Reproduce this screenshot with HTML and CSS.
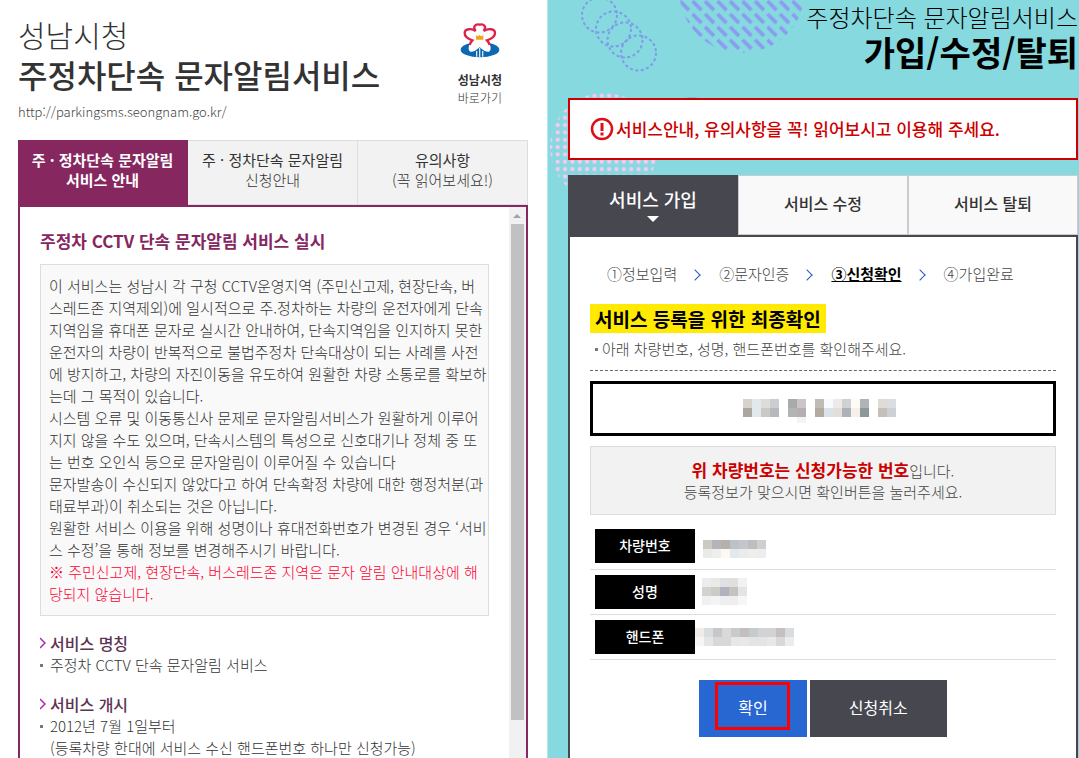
FILE: index.html
```html
<!DOCTYPE html>
<html lang="ko">
<head>
    <meta charset="UTF-8">
    <meta name="viewport" content="width=device-width, initial-scale=1.0">
    <title>주정차단속 문자알림서비스</title>
    <link rel="stylesheet" href="styles.css">
</head>
<body>
    <div class="page">
        <section class="guide">
            <header class="guide-header">
                <div>
                    <h1><span class="city">성남시청</span>주정차단속 문자알림서비스</h1>
                    <a class="site-url" href="#">http://parkingsms.seongnam.go.kr/</a>
                </div>
                <a class="city-link" href="#">
                    <svg width="40" height="35" viewBox="13 18 120 105" aria-hidden="true">
                        <ellipse cx="73" cy="98" rx="58" ry="23" fill="#0c68b3"/>
                        <path d="M60 42C50 28 60 20 72 23C84 20 94 28 84 42C96 34 118 34 118 48C118 60 106 66 94 70C104 82 110 98 100 104C88 106 78 96 72 90C66 96 56 106 44 104C34 98 40 82 50 70C38 66 27 60 27 48C27 34 50 34 60 42z" fill="#fff"/>
                        <path d="M42 84Q44 76 50 70C38 66 27 60 27 48C27 34 50 34 60 42C50 28 60 20 72 23C84 20 94 28 84 42C96 34 118 34 118 48C118 60 106 66 94 70Q100 76 102 84" fill="none" stroke="#e0204a" stroke-width="7"/>
                        <path d="M61 55l6 3 5-4 5 4 6-3v13H61z" fill="#f5a21b"/>
                        <path d="M63 102v17M72 92v28M81 102v17" stroke="#d5e6f4" stroke-width="4"/>
                    </svg>
                    <strong>성남시청</strong>
                    <span>바로가기</span>
                </a>
            </header>

            <nav class="guide-tabs">
                <a class="active" href="#">주 · 정차단속 문자알림<br>서비스 안내</a>
                <a href="#">주 · 정차단속 문자알림<br><span>신청안내</span></a>
                <a href="#">유의사항<br><span>(꼭 읽어보세요!)</span></a>
            </nav>

            <div class="guide-panel">
                <div class="guide-content">
                    <h2>주정차 CCTV 단속 문자알림 서비스 실시</h2>
                    <div class="guide-box">
                        <p>이 서비스는 성남시 각 구청 CCTV운영지역 (주민신고제, 현장단속, 버<br>스레드존 지역제외)에 일시적으로 주.정차하는 차량의 운전자에게 단속<br>지역임을 휴대폰 문자로 실시간 안내하여, 단속지역임을 인지하지 못한<br>운전자의 차량이 반복적으로 불법주정차 단속대상이 되는 사례를 사전<br>에 방지하고, 차량의 자진이동을 유도하여 원활한 차량 소통로를 확보하<br>는데 그 목적이 있습니다.</p>
                        <p>시스템 오류 및 이동통신사 문제로 문자알림서비스가 원활하게 이루어<br>지지 않을 수도 있으며, 단속시스템의 특성으로 신호대기나 정체 중 또<br>는 번호 오인식 등으로 문자알림이 이루어질 수 있습니다</p>
                        <p>문자발송이 수신되지 않았다고 하여 단속확정 차량에 대한 행정처분(과<br>태료부과)이 취소되는 것은 아닙니다.</p>
                        <p>원활한 서비스 이용을 위해 성명이나 휴대전화번호가 변경된 경우 ‘서비<br>스 수정’을 통해 정보를 변경해주시기 바랍니다.</p>
                        <p class="warning">※ 주민신고제, 현장단속, 버스레드존 지역은 문자 알림 안내대상에 해<br>당되지 않습니다.</p>
                    </div>
                    <h3><svg width="6" height="12" viewBox="0 0 6 12" aria-hidden="true"><path d="M0 1l5 5-5 5" fill="none" stroke="#b01fa8" stroke-width="1.4"/></svg>서비스 명칭</h3>
                    <ul>
                        <li>주정차 CCTV 단속 문자알림 서비스</li>
                    </ul>
                    <h3><svg width="6" height="12" viewBox="0 0 6 12" aria-hidden="true"><path d="M0 1l5 5-5 5" fill="none" stroke="#b01fa8" stroke-width="1.4"/></svg>서비스 개시</h3>
                    <ul>
                        <li>2012년 7월 1일부터<br>(등록차량 한대에 서비스 수신 핸드폰번호 하나만 신청가능)</li>
                    </ul>
                </div>
                <div class="scrollbar">
                    <svg width="17" height="17" viewBox="0 0 17 17" aria-hidden="true"><path d="M4 11l4-4 4 4z" fill="#a3a3a3"/></svg>
                    <div class="scroll-thumb"></div>
                </div>
            </div>
        </section>

        <section class="service">
            <svg class="pattern" width="270" height="210" viewBox="0 0 270 210" aria-hidden="true">
                <defs>
                    <pattern id="dots" width="7.35" height="7.35" patternUnits="userSpaceOnUse" patternTransform="translate(6 121.3)"><circle cx="3.7" cy="3.7" r="2.2" fill="#f6c8f2"/></pattern>
                    <pattern id="stripes" width="12.5" height="12.9" patternUnits="userSpaceOnUse" patternTransform="translate(143 12.5)"><path d="M1.5 1.5l9 9" stroke="#8b9cf0" stroke-width="3.8"/></pattern>
                </defs>
                <circle cx="194" cy="-10" r="63" fill="url(#stripes)"/>
                <circle cx="144" cy="115" r="18" fill="#7fb5e0"/>
                <circle cx="56" cy="147" r="54" fill="url(#dots)"/>
                <g fill="none" stroke="#7f9bea" stroke-width="2" stroke-dasharray="3 2.5">
                    <circle cx="51.5" cy="15" r="17.5"/>
                    <circle cx="65.5" cy="29" r="17.5"/>
                    <circle cx="77" cy="40" r="17.5"/>
                    <circle cx="90.5" cy="53" r="17.5"/>
                </g>
            </svg>
            <h1><span>주정차단속 문자알림서비스</span>가입/수정/탈퇴</h1>

            <p class="notice">
                <svg width="24" height="24" viewBox="0 0 24 24" aria-hidden="true"><circle cx="12" cy="12" r="10" fill="none" stroke="#d9121a" stroke-width="2.5"/><path d="M12 6v8M12 15.5v3" stroke="#d9121a" stroke-width="3"/></svg>
                서비스안내, 유의사항을 꼭! 읽어보시고 이용해 주세요.
            </p>

            <nav class="service-tabs">
                <a class="active" href="#">서비스 가입</a>
                <a href="#">서비스 수정</a>
                <a href="#">서비스 탈퇴</a>
            </nav>

            <div class="service-panel">
                <ol class="steps">
                    <li>①정보입력</li>
                    <li>②문자인증</li>
                    <li class="current">③신청확인</li>
                    <li>④가입완료</li>
                </ol>
                <h2>서비스 등록을 위한 최종확인</h2>
                <p class="help">아래 차량번호, 성명, 핸드폰번호를 확인해주세요.</p>

                <div class="plate">
                    <svg width="153" height="24" viewBox="0 0 153 24" shape-rendering="crispEdges" aria-hidden="true">
                        <path fill="#d7d2cd" d="M0 0h9v9H0z"/><path fill="#e2e9ec" d="M9 0h9v18H9z"/><path fill="#dcdcdb" d="M18 0h9v9h-9z"/><path fill="#cccdd2" d="M27 0h9v9h-9z"/>
                        <path fill="#aca6a1" d="M0 9h9v9H0z"/><path fill="#c9c9c6" d="M18 9h9v9h-9z"/><path fill="#b7b8bc" d="M27 9h9v9h-9z"/>
                        <path fill="#a8abaa" d="M45 0h9v9h-9z"/><path fill="#cbc5ca" d="M54 0h9v9h-9z"/><path fill="#b2b5b3" d="M45 9h9v9h-9z"/><path fill="#b3afb5" d="M54 9h9v9h-9z"/><path fill="#f4f3f6" d="M54 18h9v6h-9z"/>
                        <path fill="#bdbdb5" d="M72 0h9v9h-9z"/><path fill="#f8faff" d="M81 0h9v9h-9z"/><path fill="#edeae9" d="M90 0h9v9h-9z"/><path fill="#cfd1d2" d="M99 0h9v9h-9z"/><path fill="#fcfbf6" d="M108 0h9v9h-9z"/><path fill="#b1b3b8" d="M117 0h9v9h-9z"/>
                        <path fill="#b3aaa0" d="M72 9h9v9h-9z"/><path fill="#dae3ea" d="M81 9h9v9h-9z"/><path fill="#e2deda" d="M90 9h9v9h-9z"/><path fill="#adb1b8" d="M99 9h9v9h-9z"/><path fill="#f7efe9" d="M108 9h9v9h-9z"/><path fill="#8e9797" d="M117 9h9v9h-9z"/>
                        <path fill="#dddcd5" d="M135 0h9v9h-9z"/><path fill="#dbdde2" d="M144 0h9v9h-9z"/><path fill="#c6c0bb" d="M135 9h9v9h-9z"/><path fill="#cdd1d5" d="M144 9h9v9h-9z"/>
                    </svg>
                </div>

                <div class="result">
                    <p><strong>위 차량번호는 신청가능한 번호</strong>입니다.</p>
                    <p>등록정보가 맞으시면 확인버튼을 눌러주세요.</p>
                </div>

                <table class="info">
                    <tr>
                        <th scope="row"><span>차량번호</span></th>
                        <td>
                            <svg width="71" height="27" viewBox="-8 -7 71 27" shape-rendering="crispEdges" aria-hidden="true">
                                <path fill="#cdc8c1" d="M0 0h9v9H0z"/><path fill="#b5b5b9" d="M9 0h9v9H9z"/><path fill="#b5b0ac" d="M18 0h9v9h-9z"/><path fill="#bcc2c8" d="M27 0h9v9h-9z"/><path fill="#c3c6cc" d="M36 0h9v9h-9z"/><path fill="#bfbebe" d="M45 0h9v9h-9z"/><path fill="#cfcfd1" d="M54 0h9v9h-9z"/>
                                <path fill="#eaeae8" d="M0 9h9v9H0z"/><path fill="#eee" d="M9 9h9v9H9z"/><path fill="#fdf8f3" d="M18 9h9v9h-9z"/><path fill="#e4e9eb" d="M27 9h9v9h-9z"/><path fill="#eaecec" d="M36 9h9v9h-9z"/><path fill="#eeeeeb" d="M45 9h9v9h-9z"/><path fill="#ebedef" d="M54 9h9v9h-9z"/>
                            </svg>
                        </td>
                    </tr>
                    <tr>
                        <th scope="row"><span>성명</span></th>
                        <td>
                            <svg width="52" height="27" viewBox="-7 0 52 27" shape-rendering="crispEdges" aria-hidden="true">
                                <path fill="#ececee" d="M0 0h9v9H0z"/><path fill="#e9e9e7" d="M9 0h9v9H9z"/><path fill="#dfe0e4" d="M18 0h9v9h-9z"/><path fill="#e0dfde" d="M27 0h9v9h-9z"/><path fill="#f1f2f4" d="M36 0h9v9h-9z"/>
                                <path fill="#d2d2d3" d="M0 9h9v9H0z"/><path fill="#ccccc7" d="M9 9h9v9H9z"/><path fill="#b0b3bb" d="M18 9h9v9h-9z"/><path fill="#c5c3bf" d="M27 9h9v9h-9z"/><path fill="#e2e4e6" d="M36 9h9v9h-9z"/>
                                <path fill="#f0f0f1" d="M0 18h9v9H0z"/><path fill="#f3f5f5" d="M9 18h9v9H9z"/><path fill="#eeeef0" d="M18 18h9v9h-9z"/><path fill="#efeeec" d="M27 18h9v9h-9z"/><path fill="#f6f6f7" d="M36 18h9v9h-9z"/>
                            </svg>
                        </td>
                    </tr>
                    <tr>
                        <th scope="row"><span>핸드폰</span></th>
                        <td>
                            <svg width="99" height="18" viewBox="0 0 99 18" shape-rendering="crispEdges" aria-hidden="true">
                                <path fill="#f0ece9" d="M0 0h9v9H0z"/><path fill="#dadddd" d="M9 0h9v9H9z"/><path fill="#c7c7c7" d="M18 0h9v9h-9z"/><path fill="#d9d9d8" d="M27 0h9v9h-9z"/><path fill="#cacacb" d="M36 0h9v9h-9z"/><path fill="#c1bfc0" d="M45 0h9v9h-9z"/><path fill="#c6cbce" d="M54 0h9v9h-9z"/><path fill="#d3d3d4" d="M63 0h18v9H63z"/><path fill="#c3c0be" d="M81 0h9v9h-9z"/><path fill="#d8dcdf" d="M90 0h9v9h-9z"/>
                                <path fill="#f9f5f4" d="M0 9h9v9H0z"/><path fill="#e3e5e8" d="M9 9h9v9H9z"/><path fill="#d8d8d9" d="M18 9h18v9H18z"/><path fill="#e5e7e9" d="M36 9h9v9h-9z"/><path fill="#e9e8e5" d="M45 9h9v9h-9z"/><path fill="#e2e4e6" d="M54 9h18v9H54z"/><path fill="#e8e8e9" d="M72 9h9v9h-9z"/><path fill="#d9d7db" d="M81 9h9v9h-9z"/><path fill="#eaecee" d="M90 9h9v9h-9z"/>
                            </svg>
                        </td>
                    </tr>
                </table>

                <div class="buttons">
                    <button class="confirm" type="button">확인</button>
                    <button class="cancel" type="button">신청취소</button>
                </div>
            </div>
        </section>
    </div>
</body>
</html>
```
FILE: styles.css
```css
* {
    box-sizing: border-box;
}
body {
    margin: 0;
    font-family: "Noto Sans CJK KR", sans-serif;
    font-size: 15px;
    font-weight: 300;
    line-height: 22px;
    color: #333;
    background-color: #fff;
}
h1, h2, h3, p, ul, ol {
    margin: 0;
    padding: 0;
    list-style: none;
}
a {
    color: inherit;
    text-decoration: none;
}
.page {
    display: grid;
    grid-template-columns: 547fr 532fr;
    grid-template-rows: 100%;
    height: 100vh;
    overflow: hidden;
}

/* 서비스 안내 */
.guide {
    display: flex;
    flex-direction: column;
    min-width: 0;
    padding: 14px 19px 0 18px;
}
.guide-header {
    display: flex;
    flex-shrink: 0;
    justify-content: space-between;
    height: 126px;
}
.guide-header h1 {
    font-size: 32px;
    font-weight: 500;
    line-height: 40px;
}
.guide-header .city {
    display: block;
    font-size: 30px;
    font-weight: 300;
}
.site-url {
    display: block;
    margin-top: 7px;
    font-size: 13px;
    color: #444;
}
.city-link {
    display: flex;
    flex-direction: column;
    align-items: center;
    padding: 9px 26px 0 0;
    font-size: 12px;
    line-height: 18px;
}
.city-link svg {
    margin-bottom: 13px;
}
.city-link strong {
    font-weight: 700;
}
.guide-tabs {
    display: grid;
    grid-template-columns: repeat(3, 1fr);
    height: 65px;
    flex-shrink: 0;
}
.guide-tabs a {
    padding: 9px 0;
    border: 1px solid #ddd;
    border-left-width: 0;
    background-color: #f2f2f2;
    font-weight: 400;
    line-height: 20px;
    text-align: center;
}
.guide-tabs span {
    font-weight: 300;
}
.guide-tabs .active {
    border-color: #86275f;
    background-color: #86275f;
    color: #fff;
    font-weight: 700;
}
.guide-panel {
    display: flex;
    flex: 1;
    min-height: 0;
    border: 2px solid #86275f;
    border-bottom: 0;
}
.guide-content {
    flex: 1;
    padding: 22px 20px 0;
    overflow: hidden;
}
.guide-content h2 {
    margin-bottom: 11px;
    font-size: 17px;
    font-weight: 700;
    line-height: 24px;
    color: #86275f;
}
.guide-box {
    margin-bottom: 16px;
    padding: 10px 0 10px 8px;
    border: 1px solid #ddd;
    background-color: #f9f9f9;
    white-space: nowrap;
}
.warning {
    color: #f03;
}
.guide-content h3 {
    display: flex;
    align-items: center;
    gap: 4px;
    font-size: 16px;
    font-weight: 500;
    color: #5d3350;
}
.guide-content ul {
    margin-bottom: 17px;
}
.guide-content li {
    padding-left: 10px;
    background: linear-gradient(#777, #777) no-repeat 0 10px / 3px 3px;
}
.scrollbar {
    width: 17px;
    background-color: #f1f1f1;
}
.scrollbar svg {
    display: block;
}
.scroll-thumb {
    height: 90%;
    margin: 0 2px;
    background-color: #c1c1c1;
}

/* 서비스 가입 */
.service {
    position: relative;
    display: flex;
    flex-direction: column;
    min-width: 0;
    padding: 0 1px 0 20px;
    border-left: 1px solid #b5e8eb;
    background-color: #86d9de;
}
.pattern {
    position: absolute;
    top: 0;
    left: 0;
}
.service h1 {
    position: relative;
    height: 98px;
    flex-shrink: 0;
    font-size: 34px;
    font-weight: 700;
    line-height: 36px;
    text-align: right;
    color: #000;
}
.service h1 span {
    display: block;
    font-size: 24px;
    font-weight: 300;
    line-height: 34px;
}
.notice {
    position: relative;
    display: flex;
    align-items: center;
    flex-shrink: 0;
    gap: 2px;
    height: 62px;
    margin-bottom: 15px;
    padding: 0 20px;
    border: 2px solid #c00;
    background-color: #fff;
    font-size: 17px;
    font-weight: 500;
    color: #c00;
}
.service-tabs {
    position: relative;
    display: grid;
    flex-shrink: 0;
    grid-template-columns: repeat(3, 1fr);
    height: 60px;
}
.service-tabs a {
    padding: 16px 0;
    border: 1px solid #ccc;
    background-color: #f9f9f9;
    font-size: 16px;
    font-weight: 500;
    text-align: center;
}
.service-tabs .active {
    padding: 12px 0;
    border-color: #474750;
    background-color: #474750;
    font-size: 18px;
    color: #fff;
}
.service-tabs .active::after {
    content: "";
    display: block;
    width: 0;
    margin: 6px auto 0;
    border: 6px solid transparent;
    border-top-color: #fff;
    border-bottom: 0;
}
.service-panel {
    position: relative;
    flex: 1;
    padding: 26px 20px 0;
    border: 2px solid #474750;
    border-bottom: 0;
    background-color: #fff;
}
.steps {
    display: flex;
    margin: 0 17px 19px;
    color: #444;
}
.steps li + li::before {
    content: "";
    display: inline-block;
    width: 7px;
    height: 7px;
    margin: 0 20px 1px 14px;
    border: solid #2856c0;
    border-width: 1px 1px 0 0;
    transform: rotate(45deg);
}
.steps .current {
    font-weight: 700;
    color: #000;
    text-decoration: underline;
}
.service-panel h2 {
    width: fit-content;
    padding: 0 5px;
    background-color: #ffea00;
    font-size: 19px;
    font-weight: 700;
    line-height: 29px;
    color: #000;
}
.help {
    margin-bottom: 10px;
    padding: 5px 0 10px 12px;
    border-bottom: 1px dashed #666;
    background: linear-gradient(#777, #777) no-repeat 5px 15px / 3px 3px;
    color: #444;
}
.plate {
    display: flex;
    justify-content: center;
    padding: 15px 0 10px;
    border: 3px solid #000;
}
.plate svg {
    margin-right: 8px;
}
.result {
    margin: 10px 0 9px;
    padding: 12px 0 11px;
    border: 1px solid #ddd;
    background-color: #f2f2f2;
    text-align: center;
    color: #444;
}
.result p {
    height: 22px;
}
.result strong {
    font-size: 17px;
    font-weight: 700;
    color: #c00;
}
.info {
    width: 100%;
    border-collapse: collapse;
}
.info tr {
    height: 45px;
    border-bottom: 1px solid #ddd;
}
.info th {
    width: 105px;
    padding: 0 0 0 5px;
    font-size: 14px;
    font-weight: 500;
}
.info th span {
    display: block;
    height: 34px;
    background-color: #000;
    line-height: 32px;
    color: #fff;
}
.info td {
    padding: 0;
}
.info svg {
    display: block;
}
.buttons {
    display: flex;
    justify-content: center;
    gap: 3px;
    margin-top: 20px;
}
.buttons button {
    height: 57px;
    padding: 0 39px 2px;
    border: 0;
    background-color: #474750;
    font-family: inherit;
    font-size: 16px;
    font-weight: 400;
    color: #fff;
}
.buttons .confirm {
    position: relative;
    background-color: #2867d2;
}
.confirm::after {
    content: "";
    position: absolute;
    inset: 2px 17px 7px 16px;
    border: 3px solid #f00;
}
```
